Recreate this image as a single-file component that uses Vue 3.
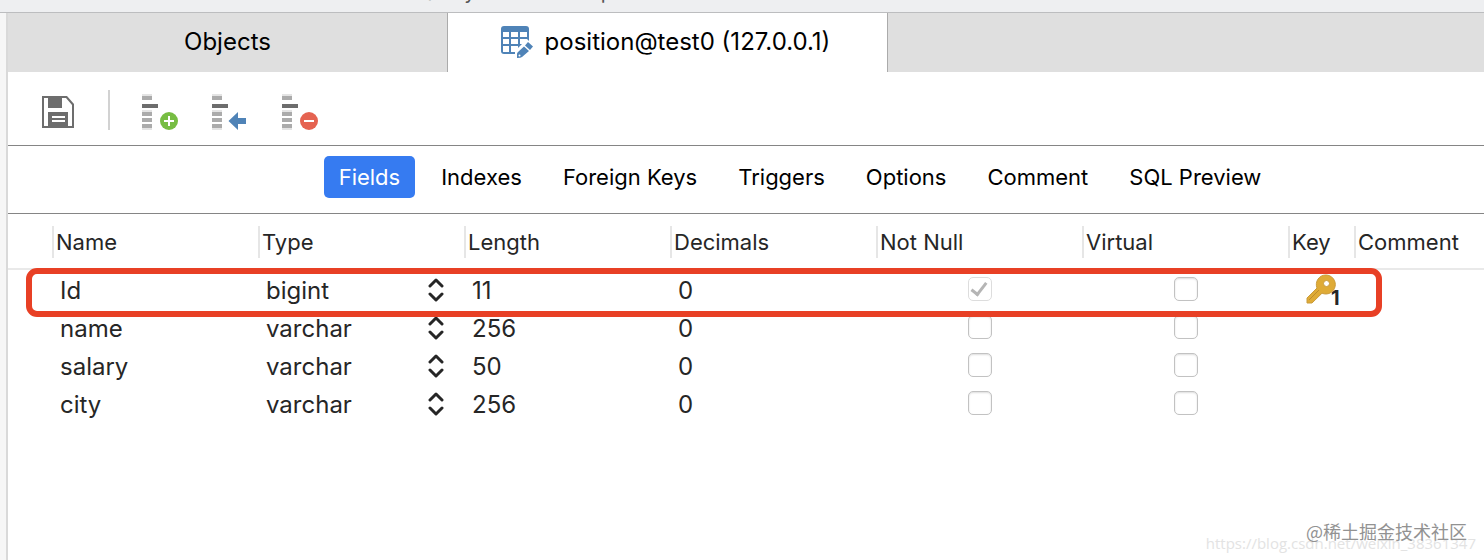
<script setup>
import { ref } from 'vue'

const menu = ['View', 'Function', 'Others', 'Query', 'Backup', 'Automation', 'Model']
const sections = ['Fields', 'Indexes', 'Foreign Keys', 'Triggers', 'Options', 'Comment', 'SQL Preview']
const active = ref('Fields')
const columns = ['Name', 'Type', 'Length', 'Decimals', 'Not Null', 'Virtual', 'Key', 'Comment']
const tools = ['add', 'insert', 'remove']
const fields = ref([
  { name: 'Id', type: 'bigint', length: '11', decimals: '0', notNull: true, virtual: false, key: 1 },
  { name: 'name', type: 'varchar', length: '256', decimals: '0', notNull: false, virtual: false },
  { name: 'salary', type: 'varchar', length: '50', decimals: '0', notNull: false, virtual: false },
  { name: 'city', type: 'varchar', length: '256', decimals: '0', notNull: false, virtual: false }
])
</script>

<template>
  <div class="window">
    <div class="menubar">
      <span v-for="item in menu" :key="item">{{ item }}</span>
    </div>
    <main class="panel">
      <nav class="tabs" aria-label="Open documents">
        <button class="tab" type="button">Objects</button>
        <button class="tab current" type="button">
          <svg class="table-icon" width="32" height="32" viewBox="0 0 32 32" aria-hidden="true">
            <path d="M3 0h22a3 3 0 0 1 3 3v14L17 28H3a3 3 0 0 1-3-3V3a3 3 0 0 1 3-3z" fill="#4f83b7" />
            <path d="M2 6h6v5H2zm8 0h7v5h-7zm9 0h7v5h-7zM2 13h6v5H2zm8 0h7v5h-7zm9 0h7v5h-7zM2 20h6v6H2zm8 0h7v6h-7zm9 0h7v6h-7z" fill="#fff" />
            <path d="M26 13 L32 19 L20 32 H14 V25z" fill="#fff" />
            <path d="M27 16 L32 20.500 L29 24 L24 19.500zM23 20.500 L28 25 L21 31 Q20 32 16 32 V28 Q16 27 17 26z" fill="#4f83b7" />
            <circle cx="18.500" cy="29.500" r="1" fill="#fff" />
          </svg>
          <span>position@test0 (127.0.0.1)</span>
        </button>
      </nav>

      <div class="toolbar">
        <button class="tool" type="button" aria-label="Save">
          <svg width="32" height="32" viewBox="0 0 32 32" aria-hidden="true">
            <path d="M0 0h25l7 8v24H0zM2 2v28h4V16h20v14h4V9l-6-7h-4v10H6V2z" fill="#6d6d6d" fill-rule="evenodd" />
            <path d="M6 2h14v10H6zM14 4v6h4V4zM6 16h20v14H6z" fill="#6d6d6d" fill-rule="evenodd" />
            <path d="M10 20h13v2H10zm0 4h13v2H10z" fill="#fff" />
          </svg>
        </button>
        <span class="divider"></span>
        <button v-for="tool in tools" :key="tool" class="tool field-tool" type="button" :aria-label="tool + ' field'">
          <svg width="38" height="38" viewBox="0 0 38 38" aria-hidden="true">
            <path d="M0 1h10v2H0zM0 17h10v2H0zM0 35h10v2H0z" fill="#e4e4e4" />
            <path d="M0 3h10v4H0zM0 19h10v4H0zM0 25h10v4H0zM0 31h10v4H0z" fill="#ababab" />
            <path d="M0 11h16v4H0z" fill="#6d6d6d" />
            <template v-if="tool === 'insert'">
              <path d="M16.500 28 L26 19 V25 H34 V31 H26 V37z" fill="#4f83b7" />
            </template>
            <template v-else>
              <circle cx="27" cy="28" r="9" :fill="tool === 'add' ? '#77bd43' : '#e56351'" />
              <path v-if="tool === 'add'" d="M22 27h4v-4h2v4h4v2h-4v4h-2v-4h-4z" fill="#fff" />
              <path v-else d="M22 27h10v2H22z" fill="#fff" />
            </template>
          </svg>
        </button>
      </div>

      <nav class="sections" aria-label="Table design">
        <button
          v-for="item in sections"
          :key="item"
          type="button"
          class="section"
          :class="{ active: item === active }"
          @click="active = item"
        >{{ item }}</button>
      </nav>

      <table class="grid">
        <colgroup>
          <col class="gutter" />
          <col v-for="n in 6" :key="n" class="wide" />
          <col class="key-col" />
          <col />
        </colgroup>
        <thead>
          <tr>
            <td></td>
            <th v-for="column in columns" :key="column" scope="col"><span>{{ column }}</span></th>
          </tr>
        </thead>
        <tbody>
          <tr v-for="field in fields" :key="field.name">
            <td :class="{ marked: field.key }"></td>
            <td>{{ field.name }}</td>
            <td>
              <div class="type">
                {{ field.type }}
                <button type="button" :aria-label="'Type of ' + field.name">
                  <svg width="16" height="24" viewBox="0 0 16 24" fill="none" stroke="#262626" stroke-width="3" stroke-linecap="round" stroke-linejoin="round" aria-hidden="true">
                    <path d="M2 8l6-6 6 6M2 16l6 6 6-6" />
                  </svg>
                </button>
              </div>
            </td>
            <td>{{ field.length }}</td>
            <td>{{ field.decimals }}</td>
            <td class="check"><input v-model="field.notNull" type="checkbox" :disabled="!!field.key" :aria-label="field.name + ' not null'" /></td>
            <td class="check"><input v-model="field.virtual" type="checkbox" :aria-label="field.name + ' virtual'" /></td>
            <td class="key">
              <div v-if="field.key" class="key-mark">
                <svg width="30" height="30" viewBox="0 0 30 30" aria-hidden="true">
                  <path d="M20 1a9.500 9.500 0 1 1-4 18.200L6 29H1v-5L11 14A9.500 9.500 0 0 1 20 1z" fill="#dfab36" stroke="#c99b3b" />
                  <path d="M3 26L13 16" stroke="#bd8d2e" stroke-width="1" />
                  <circle cx="20.500" cy="9.500" r="3" fill="#fff" stroke="#c99b3b" />
                </svg>
                <b>{{ field.key }}</b>
              </div>
            </td>
            <td></td>
          </tr>
        </tbody>
      </table>

      <footer class="credits">
        <span class="source">https://blog.csdn.net/weixin_38361347</span>
        <span class="community">@稀土掘金技术社区</span>
      </footer>
    </main>
  </div>
</template>

<style>
body {
  margin: 0;
}
</style>

<style scoped>
.window {
  display: flex;
  flex-direction: column;
  min-height: 100vh;
  overflow: hidden;
  background: #f6f6f6;
  color: #262626;
  font-family: Inter, "Liberation Sans", "Noto Sans CJK SC", sans-serif;
  font-size: 24px;
}
button {
  margin: 0;
  padding: 0;
  border: 0;
  background: none;
  color: inherit;
  font: inherit;
}
svg {
  display: block;
}
.menubar {
  display: flex;
  align-items: flex-start;
  height: 12px;
  overflow: hidden;
  border-bottom: 1px solid #bcbdbf;
  background: #eeeff1;
  color: #555;
  font-size: 20px;
  line-height: 20px;
}
.menubar span {
  flex: 0 0 131px;
  margin-top: -18px;
  text-align: center;
}
.menubar span:first-child {
  flex-basis: 119px;
}
.panel {
  position: relative;
  flex: 1;
  margin-left: 6px;
  border-left: 2px solid #d9d9d9;
  background: #fff;
}
.tabs {
  display: flex;
  height: 59px;
  background: #dfdfdf;
  color: #000;
}
.tab {
  display: flex;
  flex: 0 0 440px;
  box-sizing: border-box;
  align-items: center;
  justify-content: center;
  gap: 12px;
  padding-bottom: 2px;
  border-right: 1px solid #ababab;
}
.current {
  padding-right: 4px;
  background: #fff;
}
.toolbar {
  display: flex;
  align-items: center;
  height: 73px;
  padding-left: 34px;
  border-bottom: 1px solid #858585;
}
.tool {
  margin-top: 6px;
}
.divider {
  width: 2px;
  height: 40px;
  margin: 2px 32px 0 34px;
  background: #d2d2d2;
}
.field-tool {
  margin-right: 32px;
}
.sections {
  display: flex;
  align-items: center;
  justify-content: center;
  gap: 11px;
  height: 62px;
  padding: 0 0 5px 108px;
  border-bottom: 1px solid #858585;
  color: #000;
  font-size: 22px;
}
.section {
  height: 42px;
  padding: 0 15px;
  border-radius: 5px;
}
.section.active {
  background: #367bf1;
  color: #fff;
}
.grid {
  width: 100%;
  border-collapse: separate;
  border-spacing: 0;
  table-layout: fixed;
}
.gutter {
  width: 44px;
}
.wide {
  width: 206px;
}
.key-col {
  width: 66px;
}
th,
td {
  padding: 0;
  text-align: left;
  white-space: nowrap;
}
thead th,
thead td {
  height: 53px;
  padding-top: 1px;
  border-bottom: 2px solid #e9e9e9;
  font-size: 22px;
  font-weight: 400;
}
th span {
  display: block;
  padding-left: 2px;
  border-left: 2px solid #e6e6e6;
  line-height: 32px;
}
tbody td {
  height: 36px;
  padding: 2px 0 0 8px;
}
.type {
  display: flex;
  align-items: center;
  justify-content: space-between;
  padding-right: 20px;
}
tbody .check {
  position: relative;
  height: 38px;
  padding: 0 0 0 1px;
}
input {
  display: block;
  box-sizing: border-box;
  width: 24px;
  height: 24px;
  margin: 0 auto;
  border: 1px solid #c2c2c2;
  border-radius: 5px;
  appearance: none;
  background: #fff;
  box-shadow: inset 0 1px 2px #ddd;
}
input:disabled {
  border-color: #ddd;
  box-shadow: none;
}
.check:has(input:checked)::after {
  position: absolute;
  top: 50%;
  left: 50%;
  width: 6px;
  height: 13px;
  border: solid #b5b5b5;
  border-width: 0 3px 3px 0;
  content: "";
  pointer-events: none;
  transform: translate(-50%, -60%) rotate(38deg);
}
.marked {
  position: relative;
}
.marked::after {
  position: absolute;
  z-index: 1;
  top: -2px;
  left: 18px;
  box-sizing: border-box;
  width: 1356px;
  height: 49px;
  border: 6px solid #e84025;
  border-radius: 11px;
  content: "";
  pointer-events: none;
}
tbody .key {
  height: 38px;
  padding: 0 0 0 18px;
}
.key-mark {
  position: relative;
}
.key-mark b {
  position: absolute;
  bottom: -4px;
  left: 25px;
  font-size: 20px;
  line-height: 20px;
}
.credits span {
  position: absolute;
  white-space: nowrap;
}
.source {
  right: 8px;
  bottom: 7px;
  color: #e3e3e3;
  font-family: "Open Sans", sans-serif;
  font-size: 15px;
}
.community {
  right: 17px;
  bottom: 15px;
  color: #929292;
  font-family: "Noto Sans CJK SC", sans-serif;
  font-size: 18px;
  line-height: 28px;
}
</style>
